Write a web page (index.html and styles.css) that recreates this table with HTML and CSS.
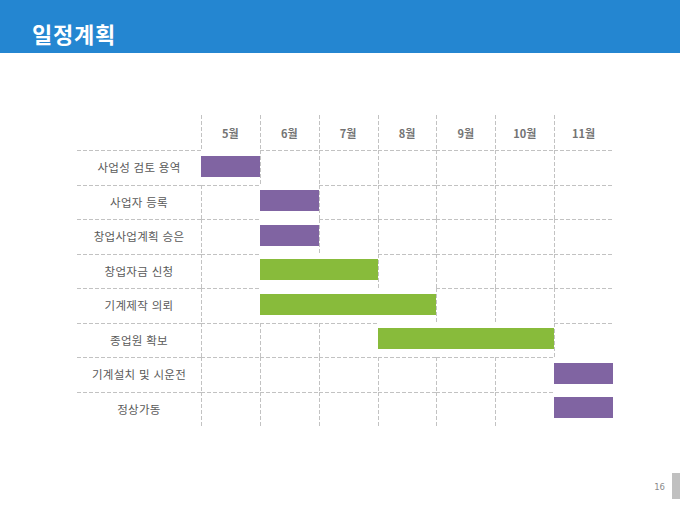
FILE: index.html
```html
<!DOCTYPE html>
<html lang="ko">
<head>
<meta charset="utf-8">
<title>일정계획</title>
<link rel="stylesheet" href="styles.css">
</head>
<body>
<div class="page">
  <header class="topbar"><h1 class="title">일정계획</h1></header>
  <main class="content">
    <div class="gantt">
      <div class="grow head">
        <div class="lab"></div>
        <div class="mh">5월</div><div class="mh">6월</div><div class="mh">7월</div><div class="mh">8월</div><div class="mh">9월</div><div class="mh">10월</div><div class="mh">11월</div>
      </div>
      <div class="grow row">
        <div class="lab">사업성 검토 용역</div>
        <div class="c"></div><div class="c"></div><div class="c"></div><div class="c"></div><div class="c"></div><div class="c"></div><div class="c"></div>
        <div class="bar purple" style="grid-column: 2 / span 1"></div>
      </div>
      <div class="grow row">
        <div class="lab">사업자 등록</div>
        <div class="c"></div><div class="c"></div><div class="c"></div><div class="c"></div><div class="c"></div><div class="c"></div><div class="c"></div>
        <div class="bar purple" style="grid-column: 3 / span 1"></div>
      </div>
      <div class="grow row">
        <div class="lab">창업사업계획 승은</div>
        <div class="c"></div><div class="c"></div><div class="c"></div><div class="c"></div><div class="c"></div><div class="c"></div><div class="c"></div>
        <div class="bar purple" style="grid-column: 3 / span 1"></div>
      </div>
      <div class="grow row">
        <div class="lab">창업자금 신청</div>
        <div class="c"></div><div class="c"></div><div class="c"></div><div class="c"></div><div class="c"></div><div class="c"></div><div class="c"></div>
        <div class="bar green" style="grid-column: 3 / span 2"></div>
      </div>
      <div class="grow row">
        <div class="lab">기계제작 의뢰</div>
        <div class="c"></div><div class="c"></div><div class="c"></div><div class="c"></div><div class="c"></div><div class="c"></div><div class="c"></div>
        <div class="bar green" style="grid-column: 3 / span 3"></div>
      </div>
      <div class="grow row">
        <div class="lab">종업원 확보</div>
        <div class="c"></div><div class="c"></div><div class="c"></div><div class="c"></div><div class="c"></div><div class="c"></div><div class="c"></div>
        <div class="bar green" style="grid-column: 5 / span 3"></div>
      </div>
      <div class="grow row">
        <div class="lab">기계설치 및 시운전</div>
        <div class="c"></div><div class="c"></div><div class="c"></div><div class="c"></div><div class="c"></div><div class="c"></div><div class="c"></div>
        <div class="bar purple" style="grid-column: 8 / span 1"></div>
      </div>
      <div class="grow row">
        <div class="lab">정상가동</div>
        <div class="c"></div><div class="c"></div><div class="c"></div><div class="c"></div><div class="c"></div><div class="c"></div><div class="c"></div>
        <div class="bar purple" style="grid-column: 8 / span 1"></div>
      </div>
    </div>
  </main>
  <footer class="foot">
    <span class="pnum">16</span>
    <span class="tab"></span>
  </footer>
</div>
</body>
</html>
```

FILE: styles.css
```css
html, body {
  margin: 0;
  padding: 0;
  background: #ffffff;
}
.page {
  width: 680px;
  height: 510px;
  display: flex;
  flex-direction: column;
  font-family: "Noto Sans CJK KR", "Noto Sans", sans-serif;
  overflow: hidden;
}
.topbar {
  height: 53px;
  box-sizing: border-box;
  background: #2486d1;
  display: flex;
  align-items: flex-start;
  padding: 22px 0 0 32px;
  flex-shrink: 0;
}
.title {
  margin: 0;
  color: #ffffff;
  font-size: 22px;
  font-weight: 700;
  line-height: 1;
  letter-spacing: 0.8px;
}
.content {
  padding: 62px 0 0 77px;
}
.gantt {
  width: 536px;
  display: flex;
  flex-direction: column;
}
.grow {
  display: grid;
  grid-template-columns: 124px repeat(7, 1fr);
  grid-template-rows: 1fr;
}
.head { height: 35px; }
.row { height: 34.5px; }
.grow > .lab, .grow > .mh, .grow > .c {
  grid-row: 1;
}
.lab {
  display: flex;
  align-items: center;
  justify-content: center;
  font-size: 11.5px;
  letter-spacing: 0.3px;
  color: #5a5a5a;
  white-space: nowrap;
}
.mh {
  display: flex;
  align-items: center;
  justify-content: center;
  font-size: 11px;
  font-weight: 700;
  color: #747474;
  background-image: repeating-linear-gradient(to bottom, #c2c2c2 0 4px, transparent 4px 6px);
  background-size: 1px 100%;
  background-repeat: no-repeat;
  background-position: left top;
}
.row > .lab {
  background-image: repeating-linear-gradient(to right, #c2c2c2 0 4px, transparent 4px 6px);
  background-size: 100% 1px;
  background-repeat: no-repeat;
  background-position: left top;
}
.c {
  background-image:
    repeating-linear-gradient(to bottom, #c2c2c2 0 4px, transparent 4px 6px),
    repeating-linear-gradient(to right, #c2c2c2 0 4px, transparent 4px 6px);
  background-size: 1px 100%, 100% 1px;
  background-repeat: no-repeat;
  background-position: left top, left top;
}
.bar {
  grid-row: 1;
  align-self: start;
  margin-top: 5.5px;
  height: 21px;
}
.purple { background: #8064a2; }
.green { background: #88bb3b; }
.foot {
  margin-top: auto;
  margin-bottom: 11px;
  height: 26px;
  display: flex;
  justify-content: flex-end;
  align-items: center;
  gap: 7px;
}
.pnum {
  font-family: "DejaVu Sans", sans-serif;
  font-size: 8.5px;
  color: #8a8a8a;
  position: relative;
  top: 1px;
}
.tab {
  width: 8px;
  height: 26px;
  background: #c0c0c0;
}
```
